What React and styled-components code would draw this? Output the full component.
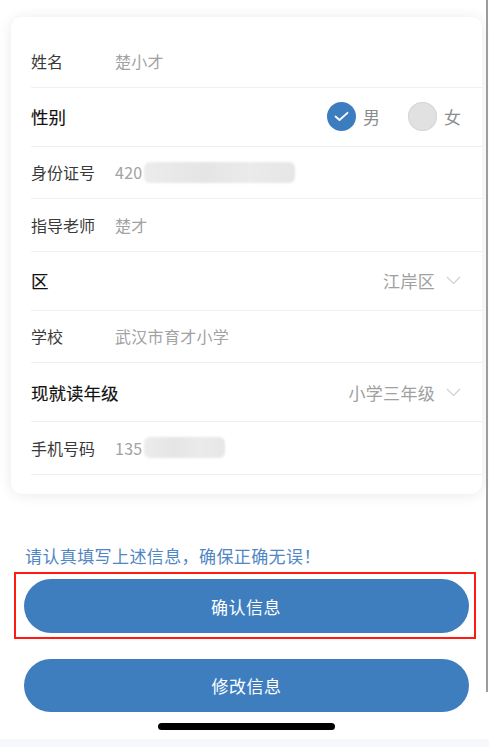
import React from "react";
import styled, { createGlobalStyle } from "styled-components";

const Global = createGlobalStyle`
  html, body { margin: 0; padding: 0; background: #fff; }
  body { font-family: "Noto Sans CJK SC", "Noto Sans", sans-serif; -webkit-font-smoothing: antialiased; }
`;

const Frame = styled.div`
  position: relative;
  width: 489px;
  height: 747px;
  overflow: hidden;
  display: flex;
  flex-direction: column;
  background: #fff;
`;

const ScrollEdge = styled.div`
  position: absolute;
  top: 0;
  left: 486px;
  width: 1.5px;
  height: 692px;
  background: #9c9c9c;
`;

const Card = styled.div`
  margin: 17px 0 0 11px;
  width: 471px;
  box-sizing: border-box;
  background: #fff;
  border-radius: 11px;
  box-shadow: 0 1px 14px rgba(0, 0, 0, 0.09);
  padding: 18px 0 19px 20px;
  display: flex;
  flex-direction: column;
`;

const Row = styled.div`
  display: flex;
  align-items: center;
  box-sizing: border-box;
  height: ${(p) => (p.$tall ? 59 : 52.5)}px;
  padding-right: 21px;
  border-bottom: 1px solid #efefef;
`;

const Label = styled.div`
  width: 84px;
  flex-shrink: 0;
  font-size: ${(p) => (p.$strong ? 17.5 : 16)}px;
  font-weight: 400;
  color: ${(p) => (p.$strong ? "#111" : "#3a3a3a")};
  -webkit-text-stroke: ${(p) => (p.$strong ? "0.15px #111" : "0")};
  white-space: nowrap;
`;

const Value = styled.div`
  display: flex;
  align-items: center;
  font-size: 16px;
  color: #a2a2a2;
  letter-spacing: 0.3px;
`;

const Masked = styled.span`
  display: inline-block;
  width: ${(p) => p.$w}px;
  height: 21px;
  margin-left: 1px;
  background: linear-gradient(90deg, #ececec, #e5e5e5 40%, #ebebeb 70%, #e6e6e6);
  border-radius: 6px;
  filter: blur(1.2px);
`;

const Right = styled.div`
  margin-left: auto;
  display: flex;
  align-items: center;
`;

const SelectText = styled.span`
  font-size: 17px;
  color: #a0a0a0;
  letter-spacing: 0.3px;
`;

const Chevron = styled.svg`
  margin-left: 11px;
  width: 15px;
  height: 9px;
`;

const RadioItem = styled.div`
  display: flex;
  align-items: center;
  gap: 7px;
  margin-left: ${(p) => (p.$first ? 0 : 28)}px;
`;

const Dot = styled.div`
  width: 29px;
  height: 29px;
  border-radius: 50%;
  background: ${(p) => (p.$on ? "#3c7dc0" : "#e1e1e1")};
  box-shadow: ${(p) => (p.$on ? "none" : "inset 0 0 0 1px #d6d6d6")};
  display: flex;
  align-items: center;
  justify-content: center;
`;

const RadioText = styled.span`
  font-size: 17px;
  color: #8c8c8c;
`;

const Note = styled.div`
  margin: 50px 0 0 25px;
  font-size: 17px;
  line-height: 24px;
  color: #4f86c4;
  letter-spacing: 0.4px;
`;

const Highlight = styled.div`
  margin: 4px 0 0 14px;
  width: 462px;
  box-sizing: border-box;
  border: 2.5px solid #ff1a12;
  padding: 5.5px 4.5px 3.5px 7.5px;
`;

const Button = styled.button`
  display: flex;
  align-items: center;
  justify-content: center;
  width: 445px;
  height: 54px;
  border: none;
  border-radius: 27px;
  background: #3e7ebf;
  color: #fff;
  font-family: inherit;
  font-size: 17px;
  letter-spacing: 0.5px;
  margin: 0;
  padding: 0;
`;

const SecondButton = styled(Button)`
  margin: 20px 0 0 24px;
  height: 53px;
`;

const HomeBar = styled.div`
  margin: 11px 0 0 158px;
  width: 177px;
  height: 7px;
  border-radius: 4px;
  background: #000;
`;

const BottomStrip = styled.div`
  margin-top: 9px;
  height: 8px;
  background: #f6f8fc;
`;

const ChevronIcon = () => (
  <Chevron viewBox="0 0 15 9">
    <path d="M1 1 L7.5 7.5 L14 1" fill="none" stroke="#d0d0d0" strokeWidth="1.2" />
  </Chevron>
);

export default function App() {
  return (
    <>
      <Global />
      <Frame>
        <Card>
          <Row>
            <Label>姓名</Label>
            <Value>楚小才</Value>
          </Row>
          <Row $tall>
            <Label $strong>性别</Label>
            <Right>
              <RadioItem $first>
                <Dot $on>
                  <svg width="15" height="11" viewBox="0 0 15 11">
                    <path d="M1.5 5.5 L5.5 9 L13.5 1.8" fill="none" stroke="#fff" strokeWidth="1.8" strokeLinecap="round" strokeLinejoin="round" />
                  </svg>
                </Dot>
                <RadioText>男</RadioText>
              </RadioItem>
              <RadioItem>
                <Dot />
                <RadioText>女</RadioText>
              </RadioItem>
            </Right>
          </Row>
          <Row>
            <Label>身份证号</Label>
            <Value>
              420
              <Masked $w={151} />
            </Value>
          </Row>
          <Row>
            <Label>指导老师</Label>
            <Value>楚才</Value>
          </Row>
          <Row $tall>
            <Label $strong>区</Label>
            <Right>
              <SelectText>江岸区</SelectText>
              <ChevronIcon />
            </Right>
          </Row>
          <Row>
            <Label>学校</Label>
            <Value>武汉市育才小学</Value>
          </Row>
          <Row $tall>
            <Label $strong>现就读年级</Label>
            <Right>
              <SelectText>小学三年级</SelectText>
              <ChevronIcon />
            </Right>
          </Row>
          <Row>
            <Label>手机号码</Label>
            <Value>
              135
              <Masked $w={81} />
            </Value>
          </Row>
        </Card>
        <Note>请认真填写上述信息，确保正确无误！</Note>
        <Highlight>
          <Button>确认信息</Button>
        </Highlight>
        <SecondButton>修改信息</SecondButton>
        <HomeBar />
        <BottomStrip />
        <ScrollEdge />
      </Frame>
    </>
  );
}
